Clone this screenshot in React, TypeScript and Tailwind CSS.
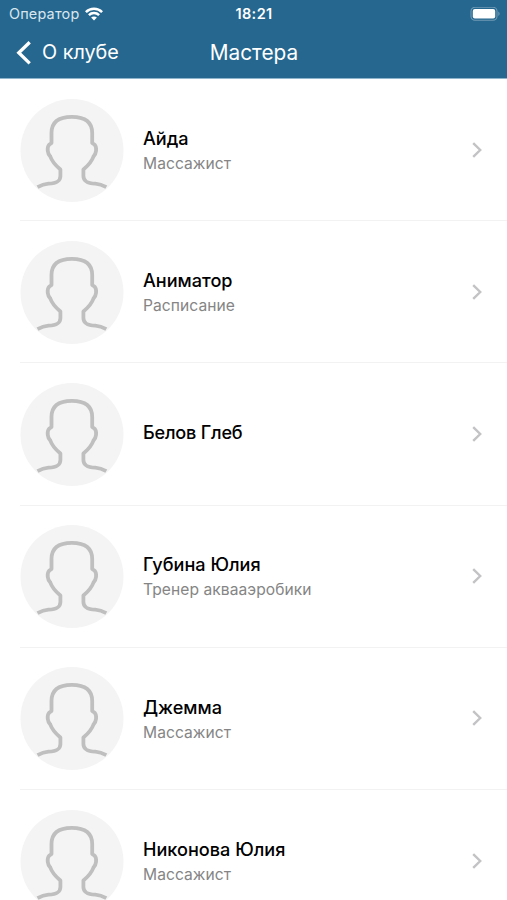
type Master = {
    name: string;
    role?: string;
};

const masters: Master[] = [
    { name: "Айда", role: "Массажист" },
    { name: "Аниматор", role: "Расписание" },
    { name: "Белов Глеб" },
    { name: "Губина Юлия", role: "Тренер аквааэробики" },
    { name: "Джемма", role: "Массажист" },
    { name: "Никонова Юлия", role: "Массажист" },
];

function WifiIcon() {
    return (
        <svg width="18" height="14" viewBox="0 0 18 14" fill="none" stroke="white" strokeWidth="2.5">
            <path d="M0.9 5.1C5.4 0.6 12.6 0.6 17.1 5.1" />
            <path d="M3.9 8.2C6.7 5.4 11.3 5.4 14.1 8.2" />
            <path d="M9 13.4L6.1 10.5C7.7 9 10.3 9 11.9 10.5Z" fill="white" stroke="none" />
        </svg>
    );
}

function BatteryIcon() {
    return (
        <svg width="32" height="15" viewBox="0 0 32 15" fill="none">
            <rect x="2" y="0.3" width="26" height="13" rx="4" stroke="#719bb5" strokeWidth="1.1" />
            <rect x="3.8" y="2.1" width="22.4" height="9.4" rx="2" fill="white" />
            <path d="M29.3 4.6C31.1 5.3 31.1 8.3 29.3 9Z" fill="#719bb5" />
        </svg>
    );
}

function Avatar() {
    return (
        <svg width="104" height="104" viewBox="-0.5 -1 104 104" fill="none" className="shrink-0">
            <circle cx="51.5" cy="51.5" r="51.5" fill="#f4f4f4" />
            <path
                d="M17 88.2C20.5 86.2 23.5 85 28 84.7C36 84.3 39.8 82.5 39.9 77V70.5C35.5 66.8 31.5 62.5 29.8 57.5C27 55 26.2 48.5 28.6 45.8L31 44V34C31 22 39 17.8 51.3 17.8S71.7 22 71.7 34V44L74.2 45.8C76.6 48.5 75.8 55 73 57.5C71.3 62.5 67.3 66.8 62.9 70.5V77C63 82.5 66.8 84.3 74.8 84.7C79.3 85 82.3 86.2 85.8 88.2"
                stroke="#bfbfbf"
                strokeWidth="3.8"
                strokeLinejoin="round"
            />
        </svg>
    );
}

function MasterRow({ name, role }: Master) {
    return (
        <li className="ml-5 flex h-[142.2px] shrink-0 items-center border-b border-[#f2f2f2] pr-[25px]">
            <Avatar />
            <div className="ml-[19px] flex-1">
                {role ? (
                    <>
                        <p className="pt-[1.5px] text-[18.1px] leading-[25px] font-medium text-black">{name}</p>
                        <p className="mt-[1px] text-[15.6px] leading-[23px] tracking-[0.06px] text-[#858585]">{role}</p>
                    </>
                ) : (
                    <p className="pb-[2px] text-[18.1px] leading-[25px] font-medium tracking-[-0.2px] text-black">{name}</p>
                )}
            </div>
            <svg width="10" height="16" viewBox="0 0 10 16" fill="none" stroke="#c3c3c6" strokeWidth="2.4">
                <path d="M1.2 1.2L8.2 8L1.2 14.8" />
            </svg>
        </li>
    );
}

export default function App() {
    return (
        <div className="flex h-[900px] w-[507px] flex-col overflow-hidden bg-white font-[Inter,'Liberation_Sans',sans-serif]">
            <header className="h-[79px] shrink-0 border-b border-[#8fb5cc] bg-[#25678f] text-white">
                <div className="grid h-7 grid-cols-3 items-center pr-[6px] pl-[9px]">
                    <div className="flex items-center gap-[6px]">
                        <span className="text-[14.4px] tracking-[0.2px] text-[#d9e6ee]">Оператор</span>
                        <WifiIcon />
                    </div>
                    <span className="pr-[2px] text-center text-[14.5px] font-semibold tracking-[0.4px]">18:21</span>
                    <div className="flex justify-end">
                        <BatteryIcon />
                    </div>
                </div>
                <div className="grid h-[49px] grid-cols-3 items-center pr-4 pl-4">
                    <div className="flex items-center gap-[10px]">
                        <svg width="16" height="24" viewBox="0 0 16 24" fill="none" stroke="white" strokeWidth="3.3">
                            <path d="M13.7 1.2L2.8 11.8L13.7 22.4" />
                        </svg>
                        <span className="pt-[1px] text-[19.8px] whitespace-nowrap">О клубе</span>
                    </div>
                    <h1 className="pt-[1px] pl-[1px] text-center text-[20.8px]">Мастера</h1>
                </div>
            </header>
            <ul className="flex flex-col">
                {masters.map((master) => (
                    <MasterRow key={master.name} {...master} />
                ))}
            </ul>
        </div>
    );
}
